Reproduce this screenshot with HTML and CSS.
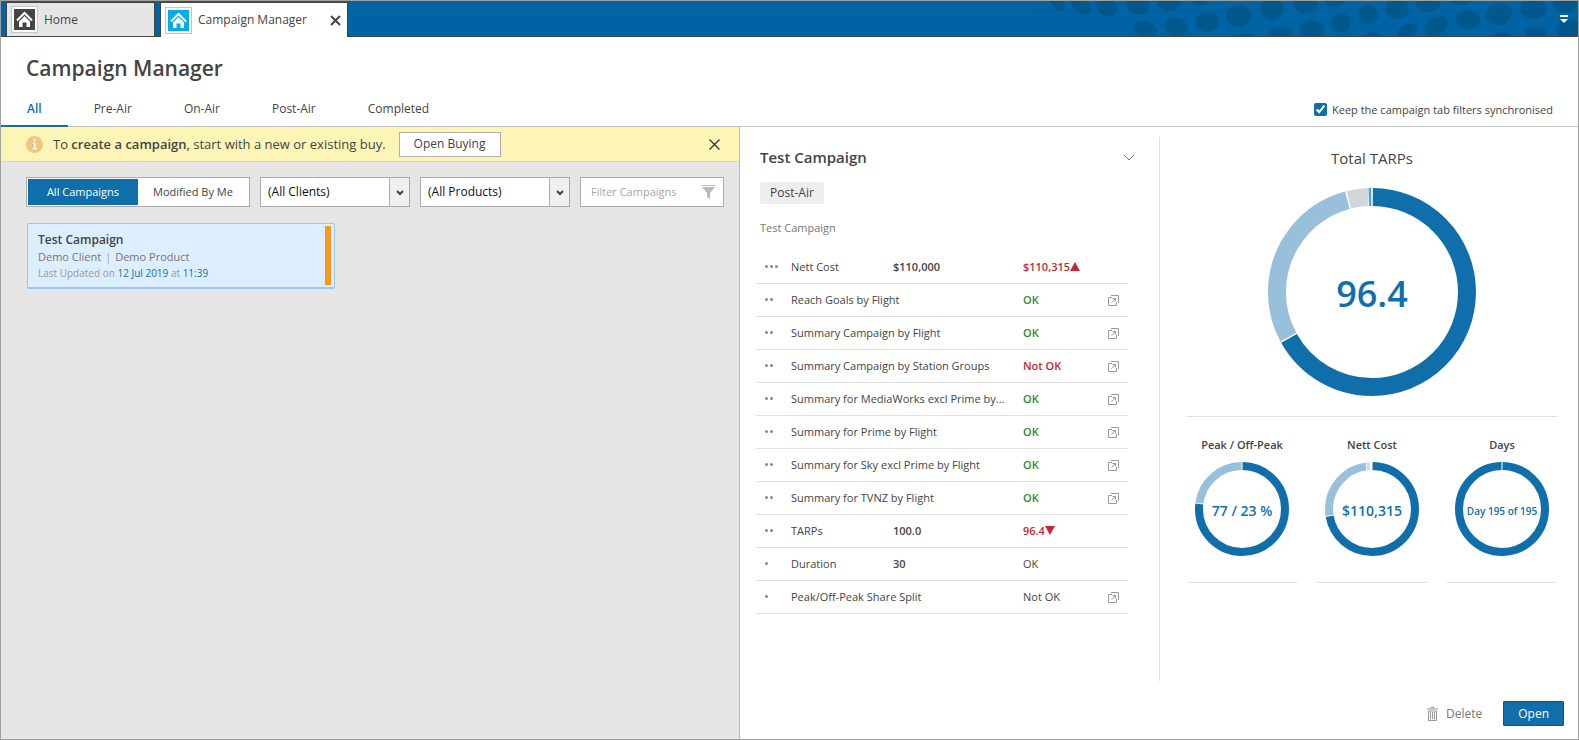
FILE: index.html
```html
<!DOCTYPE html>
<html lang="en">
<head>
  <meta charset="UTF-8">
  <meta name="viewport" content="width=device-width, initial-scale=1.0">
  <title>Campaign Manager</title>
  <link rel="stylesheet" href="styles.css">
</head>
<body>
  <!-- Shared icons -->
  <svg class="sprite" aria-hidden="true">
    <symbol id="icon-home" viewBox="0 0 21 21">
      <path d="M3 11.5 L10.5 4 L18 11.5" fill="none" stroke="#fff" stroke-width="2"/>
      <path d="M5 12.5 L10.5 7 L16 12.5 V18 H12.5 V13.5 H8.5 V18 H5 Z" fill="#fff"/>
    </symbol>
    <symbol id="icon-close" viewBox="0 0 11 11">
      <path d="M.5 .5 L10.5 10.5 M10.5 .5 L.5 10.5" fill="none" stroke="#333" stroke-width="1.3"/>
    </symbol>
    <symbol id="icon-arrow" viewBox="0 0 8 5">
      <path d="M1 1 L4 4 L7 1" fill="none" stroke="#444" stroke-width="2"/>
    </symbol>
    <symbol id="icon-popout" viewBox="0 0 11 11">
      <path d="M3 .5 H10.5 V8" fill="none" stroke="#9a9a9a"/>
      <path d="M4 2.5 H.5 V10.5 H8.5 V7" fill="none" stroke="#9a9a9a"/>
      <path d="M3.5 7.5 L7.5 3.5 M4.5 3.5 H7.5 V6.5" fill="none" stroke="#9a9a9a"/>
    </symbol>
  </svg>

  <div class="window">
    <!-- Title bar with document tabs -->
    <header class="titlebar">
      <svg class="titlebar-pattern" width="548" height="35" viewBox="0 1 548 35" aria-hidden="true">
        <g fill="#00588d">
          <ellipse cx="28" cy="4" rx="8" ry="5" transform="rotate(40 28 4)"/>
          <ellipse cx="51" cy="6" rx="11" ry="7" transform="rotate(35 51 6)"/>
          <ellipse cx="77" cy="7" rx="11" ry="9" transform="rotate(25 77 7)"/>
          <ellipse cx="108" cy="5" rx="12" ry="9" transform="rotate(20 108 5)"/>
          <ellipse cx="139" cy="2" rx="12" ry="9"/>
          <ellipse cx="170" cy="0" rx="9" ry="6"/>
          <ellipse cx="115" cy="29" rx="12" ry="8" transform="rotate(20 115 29)"/>
          <ellipse cx="146" cy="27" rx="12" ry="9" transform="rotate(15 146 27)"/>
          <ellipse cx="177" cy="22" rx="12" ry="10"/>
          <ellipse cx="209" cy="16" rx="13" ry="11"/>
          <ellipse cx="242" cy="9" rx="12" ry="11"/>
          <ellipse cx="275" cy="3" rx="12" ry="10"/>
          <ellipse cx="305" cy="0" rx="10" ry="7"/>
          <ellipse cx="216" cy="37" rx="9" ry="4"/>
          <ellipse cx="250" cy="35" rx="12" ry="8"/>
          <ellipse cx="282" cy="30" rx="12" ry="10"/>
          <ellipse cx="311" cy="23" rx="10" ry="10"/>
          <ellipse cx="338" cy="15" rx="10" ry="10"/>
          <ellipse cx="367" cy="9" rx="12" ry="10"/>
          <ellipse cx="398" cy="3" rx="12" ry="9"/>
          <ellipse cx="431" cy="0" rx="10" ry="5"/>
          <ellipse cx="343" cy="37" rx="9" ry="5"/>
          <ellipse cx="377" cy="32" rx="11" ry="7" transform="rotate(-35 377 32)"/>
          <ellipse cx="406" cy="26" rx="12" ry="9" transform="rotate(-30 406 26)"/>
          <ellipse cx="438" cy="20" rx="12" ry="10"/>
          <ellipse cx="469" cy="14" rx="13" ry="11" transform="rotate(-15 469 14)"/>
          <ellipse cx="503" cy="9" rx="13" ry="10"/>
          <ellipse cx="535" cy="4" rx="12" ry="9"/>
          <ellipse cx="473" cy="37" rx="10" ry="5"/>
          <ellipse cx="506" cy="34" rx="11" ry="7"/>
          <ellipse cx="539" cy="29" rx="13" ry="10"/>
        </g>
      </svg>
      <div class="doc-tab doc-tab-home">
        <span class="doc-icon"><svg width="21" height="21"><use href="#icon-home"/></svg></span>
        <a href="#home">Home</a>
      </div>
      <div class="doc-tab doc-tab-active">
        <span class="doc-icon"><svg width="21" height="21"><use href="#icon-home"/></svg></span>
        <a href="#campaigns">Campaign Manager</a>
        <button class="icon-button doc-close" aria-label="Close tab">
          <svg width="11" height="11" viewBox="0 0 11 11"><path d="M1 1 L10 10 M10 1 L1 10" fill="none" stroke="#444" stroke-width="2"/></svg>
        </button>
      </div>
      <button class="icon-button titlebar-menu" aria-label="Window list">
        <svg width="8" height="8" viewBox="0 0 8 8"><path d="M0 0 H8 V2 H0 Z M0 4 H8 L4 8 Z" fill="#fff"/></svg>
      </button>
    </header>

    <h1 class="title">Campaign Manager</h1>

    <!-- Status tabs -->
    <div class="tab-row">
      <nav class="tabs">
        <a class="tab tab-active" href="#all">All</a>
        <a class="tab" href="#pre-air">Pre-Air</a>
        <a class="tab" href="#on-air">On-Air</a>
        <a class="tab" href="#post-air">Post-Air</a>
        <a class="tab" href="#completed">Completed</a>
      </nav>
      <label class="sync"><input type="checkbox" checked>Keep the campaign tab filters synchronised</label>
    </div>

    <main class="main">
      <!-- Campaign list -->
      <section class="list-pane">
        <div class="banner">
          <svg class="banner-icon" width="17" height="17" viewBox="0 0 17 17">
            <circle cx="8.5" cy="8.5" r="8.5" fill="#edc77f"/>
            <circle cx="8.5" cy="4" r="1.3" fill="#fff"/>
            <path d="M6.5 6.5 H9.5 V12.5 H11 V13.5 H6.5 V12.5 H8 V7.5 H6.5 Z" fill="#fff"/>
          </svg>
          <p class="banner-text">To <b>create a campaign</b>, start with a new or existing buy.</p>
          <button class="banner-button">Open Buying</button>
          <button class="icon-button banner-close" aria-label="Dismiss">
            <svg width="11" height="11"><use href="#icon-close"/></svg>
          </button>
        </div>

        <div class="filters">
          <div class="segment">
            <button class="segment-button segment-on">All Campaigns</button>
            <button class="segment-button">Modified By Me</button>
          </div>
          <div class="select">
            <select aria-label="Client"><option>(All Clients)</option></select>
            <span class="select-arrow"><svg width="8" height="5"><use href="#icon-arrow"/></svg></span>
          </div>
          <div class="select">
            <select aria-label="Product"><option>(All Products)</option></select>
            <span class="select-arrow"><svg width="8" height="5"><use href="#icon-arrow"/></svg></span>
          </div>
          <div class="search">
            <input type="text" placeholder="Filter Campaigns" aria-label="Filter Campaigns">
            <svg width="13" height="14" viewBox="0 0 13 14"><path d="M0 0 H13 V1 H0 Z M0 2 H13 L8 8 V14 L5 12 V8 Z" fill="#b9b9b9"/></svg>
          </div>
        </div>

        <article class="card">
          <div class="card-body">
            <h3>Test Campaign</h3>
            <p class="card-client">Demo Client<span class="card-sep">|</span>Demo Product</p>
            <p class="card-updated">Last Updated on <b>12 Jul 2019</b> at <b>11:39</b></p>
          </div>
          <div class="card-bar"></div>
        </article>
      </section>

      <!-- Selected campaign -->
      <section class="detail-pane">
        <div class="detail">
          <div class="summary">
            <div class="summary-head">
              <h2>Test Campaign</h2>
              <button class="icon-button" aria-label="Expand">
                <svg width="12" height="7" viewBox="0 0 12 7"><path d="M1 1 L6 6 L11 1" fill="none" stroke="#777"/></svg>
              </button>
            </div>
            <span class="tag">Post-Air</span>
            <p class="summary-name">Test Campaign</p>

            <table class="goals">
              <colgroup>
                <col class="col-dots"><col class="col-name"><col class="col-target"><col class="col-result"><col class="col-link">
              </colgroup>
              <tbody>
                <tr>
                  <td><span class="dots"><i></i><i></i><i></i></span></td>
                  <td>Nett Cost</td>
                  <td class="strong">$110,000</td>
                  <td class="bad">$110,315<svg class="trend" width="10" height="9" viewBox="0 0 10 9"><path d="M0 9 L5 0 L10 9 Z"/></svg></td>
                  <td></td>
                </tr>
                <tr>
                  <td><span class="dots"><i></i><i></i></span></td>
                  <td colspan="2">Reach Goals by Flight</td>
                  <td class="good">OK</td>
                  <td><button class="icon-button" aria-label="Open report"><svg width="11" height="11"><use href="#icon-popout"/></svg></button></td>
                </tr>
                <tr>
                  <td><span class="dots"><i></i><i></i></span></td>
                  <td colspan="2">Summary Campaign by Flight</td>
                  <td class="good">OK</td>
                  <td><button class="icon-button" aria-label="Open report"><svg width="11" height="11"><use href="#icon-popout"/></svg></button></td>
                </tr>
                <tr>
                  <td><span class="dots"><i></i><i></i></span></td>
                  <td colspan="2">Summary Campaign by Station Groups</td>
                  <td class="bad">Not OK</td>
                  <td><button class="icon-button" aria-label="Open report"><svg width="11" height="11"><use href="#icon-popout"/></svg></button></td>
                </tr>
                <tr>
                  <td><span class="dots"><i></i><i></i></span></td>
                  <td colspan="2">Summary for MediaWorks excl Prime by...</td>
                  <td class="good">OK</td>
                  <td><button class="icon-button" aria-label="Open report"><svg width="11" height="11"><use href="#icon-popout"/></svg></button></td>
                </tr>
                <tr>
                  <td><span class="dots"><i></i><i></i></span></td>
                  <td colspan="2">Summary for Prime by Flight</td>
                  <td class="good">OK</td>
                  <td><button class="icon-button" aria-label="Open report"><svg width="11" height="11"><use href="#icon-popout"/></svg></button></td>
                </tr>
                <tr>
                  <td><span class="dots"><i></i><i></i></span></td>
                  <td colspan="2">Summary for Sky excl Prime by Flight</td>
                  <td class="good">OK</td>
                  <td><button class="icon-button" aria-label="Open report"><svg width="11" height="11"><use href="#icon-popout"/></svg></button></td>
                </tr>
                <tr>
                  <td><span class="dots"><i></i><i></i></span></td>
                  <td colspan="2">Summary for TVNZ by Flight</td>
                  <td class="good">OK</td>
                  <td><button class="icon-button" aria-label="Open report"><svg width="11" height="11"><use href="#icon-popout"/></svg></button></td>
                </tr>
                <tr>
                  <td><span class="dots"><i></i><i></i></span></td>
                  <td>TARPs</td>
                  <td class="strong">100.0</td>
                  <td class="bad">96.4<svg class="trend" width="10" height="9" viewBox="0 0 10 9"><path d="M0 0 H10 L5 9 Z"/></svg></td>
                  <td></td>
                </tr>
                <tr>
                  <td><span class="dots"><i></i></span></td>
                  <td>Duration</td>
                  <td class="strong">30</td>
                  <td>OK</td>
                  <td></td>
                </tr>
                <tr>
                  <td><span class="dots"><i></i></span></td>
                  <td colspan="2">Peak/Off-Peak Share Split</td>
                  <td>Not OK</td>
                  <td><button class="icon-button" aria-label="Open report"><svg width="11" height="11"><use href="#icon-popout"/></svg></button></td>
                </tr>
              </tbody>
            </table>
          </div>

          <!-- Charts: arc lengths and offsets are in degrees -->
          <div class="charts">
            <div class="chart chart-total">
              <h3>Total TARPs</h3>
              <div class="donut">
                <svg width="208" height="208" viewBox="0 0 208 208">
                  <g fill="none" stroke-width="18" transform="rotate(-90 104 104)">
                    <circle cx="104" cy="104" r="95" pathLength="360" stroke="#106fab" stroke-dasharray="240.3 360" stroke-dashoffset="-0.5"/>
                    <circle cx="104" cy="104" r="95" pathLength="360" stroke="#98c0da" stroke-dasharray="103.3 360" stroke-dashoffset="-241.6"/>
                    <circle cx="104" cy="104" r="95" pathLength="360" stroke="#d3d7dc" stroke-dasharray="11.8 360" stroke-dashoffset="-345.8"/>
                    <circle cx="104" cy="104" r="95" pathLength="360" stroke="#3fa9cf" stroke-dasharray="1.5 360" stroke-dashoffset="-358"/>
                  </g>
                </svg>
                <strong class="donut-big">96.4</strong>
              </div>
            </div>

            <div class="chart-row">
              <div class="chart">
                <h4>Peak / Off-Peak</h4>
                <div class="donut">
                  <svg width="94" height="94" viewBox="0 0 94 94">
                    <g fill="none" stroke-width="8" transform="rotate(-90 47 47)">
                      <circle cx="47" cy="47" r="43" pathLength="360" stroke="#106fab" stroke-dasharray="276 360" stroke-dashoffset="-0.7"/>
                      <circle cx="47" cy="47" r="43" pathLength="360" stroke="#98c0da" stroke-dasharray="81.3 360" stroke-dashoffset="-278"/>
                    </g>
                  </svg>
                  <strong class="donut-mid">77 / 23 %</strong>
                </div>
              </div>
              <div class="chart">
                <h4>Nett Cost</h4>
                <div class="donut">
                  <svg width="94" height="94" viewBox="0 0 94 94">
                    <g fill="none" stroke-width="8" transform="rotate(-90 47 47)">
                      <circle cx="47" cy="47" r="43" pathLength="360" stroke="#106fab" stroke-dasharray="259.5 360" stroke-dashoffset="-0.7"/>
                      <circle cx="47" cy="47" r="43" pathLength="360" stroke="#98c0da" stroke-dasharray="90.5 360" stroke-dashoffset="-261.5"/>
                      <circle cx="47" cy="47" r="43" pathLength="360" stroke="#d9dadc" stroke-dasharray="4.5 360" stroke-dashoffset="-353"/>
                    </g>
                  </svg>
                  <strong class="donut-mid">$110,315</strong>
                </div>
              </div>
              <div class="chart">
                <h4>Days</h4>
                <div class="donut">
                  <svg width="94" height="94" viewBox="0 0 94 94">
                    <g fill="none" stroke-width="8" transform="rotate(-90 47 47)">
                      <circle cx="47" cy="47" r="43" pathLength="360" stroke="#106fab" stroke-dasharray="358.6 360" stroke-dashoffset="-0.7"/>
                    </g>
                  </svg>
                  <strong class="donut-small">Day 195 of 195</strong>
                </div>
              </div>
            </div>
          </div>
        </div>

        <footer class="actions">
          <button class="delete-button">
            <svg width="11" height="14" viewBox="0 0 11 14">
              <path d="M4 1.5 V.5 H7 V1.5 M0 2 H11" fill="none" stroke="#999"/>
              <path d="M1.5 4 V13.5 H9.5 V4 Z M3.5 5 V12 M5.5 5 V12 M7.5 5 V12" fill="none" stroke="#999"/>
            </svg>
            Delete
          </button>
          <button class="open-button">Open</button>
        </footer>
      </section>
    </main>
  </div>
</body>
</html>
```
FILE: styles.css
```css
/* General Styles */
* {
  box-sizing: border-box;
}

body {
  margin: 0;
  font-family: "Open Sans", "Noto Sans", sans-serif;
  font-size: 12px;
  line-height: 16px;
  color: #444;
  background: #fff;
}

h1, h2, h3, h4, p {
  margin: 0;
  font-weight: 600;
}

p {
  font-weight: 400;
}

b, strong {
  font-weight: 600;
}

a {
  color: inherit;
  text-decoration: none;
}

button, input, select {
  font: inherit;
  color: inherit;
}

button {
  cursor: pointer;
}

svg {
  display: block;
}

.sprite {
  display: none;
}

.window {
  display: flex;
  flex-direction: column;
  min-height: 100vh;
  border: 1px solid #a0a0a0;
}

.icon-button {
  display: block;
  padding: 0;
  border: none;
  background: none;
}

/* Title Bar */
.titlebar {
  position: relative;
  display: flex;
  align-items: flex-end;
  height: 36px;
  padding: 0 10px 0 5px;
  background: #0063a3;
  border-bottom: 1px solid #444;
}

.titlebar-pattern {
  position: absolute;
  top: 0;
  right: 0;
}

.doc-tab {
  display: flex;
  align-items: center;
  height: 34px;
  padding: 0 6px 0 4px;
  border: 1px solid #444;
  border-bottom: none;
  background: #e6e6e6;
}

.doc-tab-home {
  width: 149px;
  margin-right: 5px;
}

.doc-tab-active {
  width: 188px;
  height: 35px;
  margin-bottom: -1px;
  background: #fff;
}

.doc-icon {
  padding: 2px;
  margin-right: 6px;
  border: 1px solid #c4c4c4;
  background: #fff;
}

.doc-icon svg {
  background: #444;
}

.doc-tab-active .doc-icon svg {
  background: #00adea;
}

.doc-close {
  margin-left: auto;
}

.titlebar-menu {
  position: relative;
  align-self: center;
  margin-left: auto;
}

/* Page Heading */
.title {
  padding: 15px 25px 0;
  font-size: 21px;
  line-height: 32px;
}

.tab-row {
  display: flex;
  justify-content: space-between;
  padding-right: 25px;
  border-bottom: 1px solid #c4c4c4;
}

.tabs {
  display: flex;
  margin-bottom: -1px;
}

.tab {
  padding: 16px 26px 7px;
  border-bottom: 2px solid transparent;
  font-size: 12px;
  line-height: 18px;
}

.tab-active {
  color: #106fab;
  font-weight: 600;
  border-bottom-color: #106fab;
}

.sync {
  display: flex;
  align-items: center;
  gap: 5px;
  padding-top: 9px;
  font-size: 11px;
}

.sync input {
  width: 13px;
  height: 13px;
  margin: 0;
  accent-color: #106fab;
}

/* Campaign List */
.main {
  flex: 1;
  display: grid;
  grid-template-columns: 739fr 838fr;
}

.list-pane {
  background: #e6e6e6;
  border-right: 1px solid #bbb;
}

.banner {
  display: flex;
  align-items: center;
  height: 35px;
  padding: 0 19px 0 25px;
  background: #fcf5b5;
  border-bottom: 1px solid #e5dc86;
}

.banner-text {
  margin: 0 13px 0 10px;
  font-size: 13px;
}

.banner-button {
  height: 25px;
  padding: 0 14px;
  background: #fff;
  border: 1px solid #b0b0b0;
}

.banner-close {
  margin-left: auto;
}

.filters {
  display: grid;
  grid-template-columns: minmax(0, 224fr) minmax(0, 150fr) minmax(0, 150fr) minmax(0, 144fr);
  gap: 10px;
  padding: 15px 15px 16px 25px;
}

.segment, .select, .search {
  display: flex;
  height: 30px;
  background: #fff;
  border: 1px solid #ababab;
}

.segment {
  padding: 1px;
  font-size: 11px;
}

.segment-button {
  flex: 1;
  padding: 0;
  border: none;
  background: none;
}

.segment-on {
  background: #106fab;
  color: #fff;
}

.select {
  position: relative;
}

.select select {
  width: 100%;
  padding: 0 28px 0 7px;
  border: none;
  background: none;
  appearance: none;
  color: #111;
}

.select-arrow {
  position: absolute;
  top: 0;
  right: 0;
  display: flex;
  align-items: center;
  justify-content: center;
  width: 20px;
  height: 100%;
  background: #f0f0f0;
  border-left: 1px solid #ababab;
  pointer-events: none;
}

.search {
  align-items: center;
  padding: 0 8px 0 10px;
  font-size: 11px;
}

.search input {
  flex: 1;
  min-width: 0;
  padding: 0;
  border: none;
  outline: none;
}

.search input::placeholder {
  color: #a6a6a6;
}

.card {
  display: flex;
  width: 308px;
  margin-left: 26px;
  padding: 2px 3px 2px 10px;
  background: #ddeeff;
  border: 1px solid #90c8f8;
  border-bottom-width: 2px;
  border-radius: 2px;
}

.card-body {
  flex: 1;
  padding: 5px 0;
}

.card h3 {
  font-size: 12px;
  line-height: 17px;
}

.card-client {
  font-size: 11px;
  line-height: 18px;
  color: #777;
}

.card-sep {
  margin: 0 4px;
  color: #aaa;
}

.card-updated {
  font-size: 10px;
  line-height: 14px;
  color: #999;
}

.card-updated b {
  color: #106fab;
  font-weight: 500;
}

.card-bar {
  width: 6px;
  background: #fa961e;
}

/* Campaign Detail */
.detail-pane {
  display: flex;
  flex-direction: column;
}

.detail {
  flex: 1;
  display: grid;
  grid-template-columns: 420fr 418fr;
  padding-top: 10px;
}

.summary {
  padding: 9px 24px 0 16px;
  border-right: 1px solid #e0e0e0;
}

.summary-head {
  display: flex;
  align-items: center;
  justify-content: space-between;
  padding-left: 4px;
}

.summary h2 {
  font-size: 15px;
  line-height: 22px;
}

.tag {
  display: inline-block;
  margin: 14px 0 0 4px;
  padding: 3px 10px;
  background: #eee;
  border-radius: 1px;
}

.summary-name {
  padding: 16px 4px 15px;
  font-size: 11px;
  color: #777;
}

.goals {
  width: calc(100% - 7px);
  table-layout: fixed;
  border-collapse: separate;
  border-spacing: 0;
  font-size: 11px;
}

.goals td {
  height: 33px;
  padding: 0;
  border-bottom: 1px solid #e0e0e0;
  white-space: nowrap;
}

.col-dots {
  width: 35px;
}

.col-name {
  width: 102px;
}

.col-target {
  width: 130px;
}

.col-link {
  width: 20px;
}

.dots {
  display: flex;
  gap: 2px;
  padding: 0 0 2px 9px;
}

.dots i {
  width: 3px;
  height: 3px;
  border-radius: 50%;
  background: #888;
}

.goals .strong, .goals .good, .goals .bad {
  font-weight: 600;
}

.good {
  color: #2f8a2f;
}

.bad {
  color: #bf2a33;
}

.trend {
  display: inline-block;
  fill: #bf2a33;
}

/* Charts */
.charts {
  padding: 10px 21px 0 27px;
}

.chart {
  text-align: center;
  padding-bottom: 26px;
  border-bottom: 1px solid #e0e0e0;
}

.chart-total {
  padding-bottom: 20px;
}

.chart h3 {
  margin-bottom: 19px;
  font-size: 15px;
  font-weight: 400;
  line-height: 22px;
}

.chart h4 {
  margin-bottom: 9px;
  font-size: 11px;
}

.chart-row {
  display: grid;
  grid-template-columns: repeat(3, 1fr);
  gap: 20px;
  padding-top: 20px;
}

.donut {
  display: grid;
  place-items: center;
  color: #106fab;
}

.donut svg, .donut strong {
  grid-area: 1 / 1;
}

.donut strong {
  padding-top: 3px;
}

.donut-big {
  font-size: 36px;
  line-height: 40px;
}

.donut-mid {
  font-size: 14px;
}

.donut-small {
  font-size: 10px;
}

/* Footer Actions */
.actions {
  display: flex;
  justify-content: flex-end;
  gap: 21px;
  padding: 20px 14px 13px;
}

.delete-button {
  display: flex;
  align-items: center;
  gap: 8px;
  padding: 0;
  border: none;
  background: none;
  color: #777;
}

.open-button {
  height: 25px;
  padding: 0 14px;
  background: #106fab;
  border: 1px solid #0a5687;
  border-radius: 1px;
  color: #fff;
}
```
